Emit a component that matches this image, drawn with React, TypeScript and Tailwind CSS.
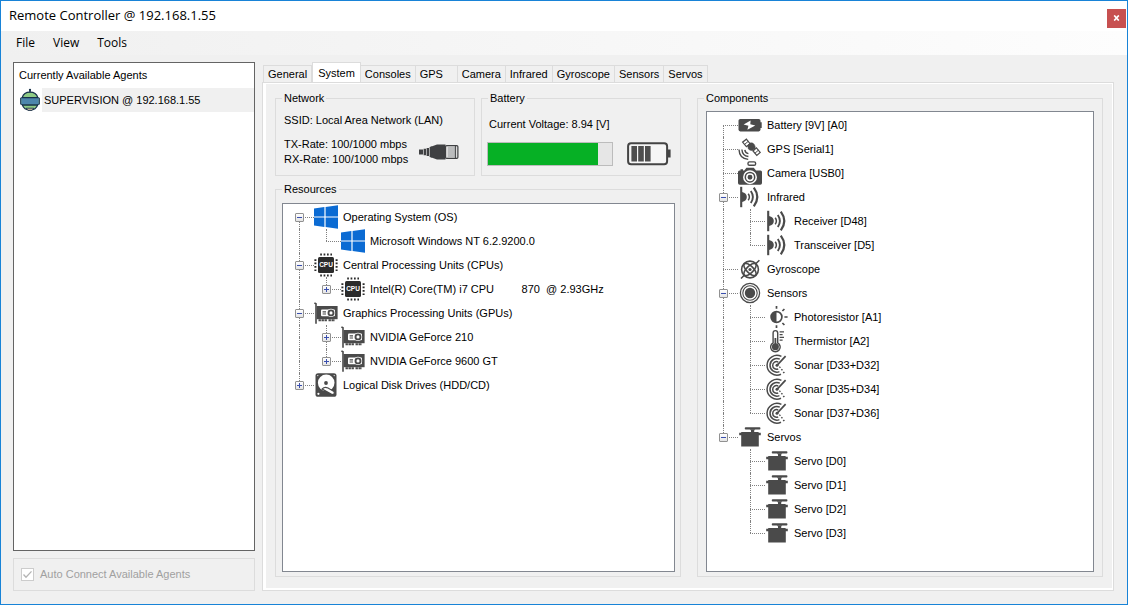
import React, { useState } from "react";

type IconName =
  | "windows"
  | "cpu"
  | "gpu"
  | "hdd"
  | "battery"
  | "gps"
  | "camera"
  | "infrared"
  | "gyroscope"
  | "sensors"
  | "photoresistor"
  | "thermistor"
  | "sonar"
  | "servo";

interface TreeItem {
  label: string;
  icon: IconName;
  open?: boolean;
  expandable?: boolean;
  children?: TreeItem[];
}

const INK = "#4a4a4a";

const glyphs: Record<IconName, React.ReactNode> = {
  windows: (
    <g fill="#0b6bd3">
      <path d="M0 3.6 10.4 2.1V11.4H0ZM11.6 1.9 24 .2V11.4H11.6ZM0 12.6H10.4V22L0 20.4ZM11.6 12.6H24V23.8L11.6 22.1Z" />
    </g>
  ),
  cpu: (
    <g>
      <rect x="4" y="4" width="16" height="16" rx="1.5" fill="#2b2b2b" />
      <g stroke="#2b2b2b" strokeWidth="2" strokeDasharray="1.7 1.7">
        <path d="M6.2 1.6H18M6.2 22.4H18M1.4 6.2V18M22.6 6.2V18" />
      </g>
      <text
        x="12"
        y="14.2"
        textAnchor="middle"
        fontSize="6.5"
        fontWeight="700"
        fill="#fff"
        fontFamily="Liberation Sans, sans-serif"
      >
        CPU
      </text>
    </g>
  ),
  gpu: (
    <g>
      <path d="M.4 2 2 2.8V22.8" fill="none" stroke={INK} strokeWidth="1.6" />
      <rect x="2.6" y="5" width="21" height="13.2" fill={INK} />
      <path d="M4.5 19.2H13M14.5 19.2H21" stroke={INK} strokeWidth="2" strokeDasharray="2.4 .6" />
      <rect x="7" y="8.6" width="14" height="6.6" rx="1" fill="#fff" />
      <path d="M8.6 10.9H12M8.6 13H12" stroke={INK} strokeWidth="1.1" />
      <circle cx="17" cy="11.9" r="4.2" fill="#fff" />
      <circle cx="17" cy="11.9" r="2.5" fill="#fff" stroke={INK} strokeWidth="1.9" />
    </g>
  ),
  hdd: (
    <g>
      <rect x="1.5" y=".2" width="21" height="23.6" rx="2.6" fill={INK} />
      <circle cx="12.2" cy="9.8" r="8.3" fill="#fff" />
      <circle cx="12" cy="10" r="1.9" fill={INK} />
      <path
        d="M8.2 16Q10.6 13.2 14 15L20 18.6Q21.2 21.6 18 21.6Z"
        fill="#fff"
        stroke={INK}
        strokeWidth="1.2"
      />
      <circle cx="4.4" cy="20.8" r="1.1" fill="#fff" />
      <circle cx="3.8" cy="2.6" r=".6" fill="#fff" />
      <circle cx="20.2" cy="2.6" r=".6" fill="#fff" />
    </g>
  ),
  battery: (
    <g>
      <rect x=".5" y="6" width="22" height="12.4" rx="1.8" fill={INK} />
      <path d="M22 9.3H23.7V15H22Z" fill={INK} />
      <path d="M12.6 7.4 5.6 11.6 10.4 12.7 9.4 16.8 17.3 12.4 12.3 11.2Z" fill="#fff" />
    </g>
  ),
  gps: (
    <g fill="none" stroke={INK}>
      <path d="M8.4 2.2 12 6.6 8.4 9.6 4.6 5.2ZM18.4 10.8 22.2 15.4 18.8 18.4 15 14Z" strokeWidth="1.2" />
      <path d="M6.6 7.4 10.2 4.4M17 16.2 20.4 13.2" strokeWidth="1" />
      <path d="M9.6 8.4 12.2 6Q14.4 5.4 16 7.2T17.2 11.6L14.6 13.4Q11.8 13.8 10.4 12Z" fill={INK} strokeWidth=".6" />
      <path d="M1 12.5Q1.3 21.6 10.2 22.4M3.9 12.5Q4.3 18.8 10.4 19.5M6.8 12.8Q7.3 16 10.4 16.6" strokeWidth="1.4" />
    </g>
  ),
  camera: (
    <g>
      <rect x="10" y=".9" width="7.6" height="3.4" rx="1.4" fill="#fff" stroke={INK} strokeWidth="1.4" />
      <path
        d="M1.5 9.4H2.5V8.2H5V9.4H6.3L8.4 6.8H15.8L18 9.4H22.5Q24 9.4 24 11V22Q24 23.7 22.3 23.7H1.7Q0 23.7 0 22V11Q0 9.4 1.5 9.4Z"
        fill={INK}
      />
      <circle cx="12" cy="16.2" r="6.2" fill={INK} stroke="#fff" strokeWidth="1.5" />
      <circle cx="12" cy="16.2" r="3.2" fill="none" stroke="#fff" strokeWidth="1.5" />
    </g>
  ),
  infrared: (
    <g fill="none" stroke={INK}>
      <path d="M3.2 1.8V22.2" strokeWidth="2.1" />
      <path d="M4 7Q8.8 8 8.8 12T4 17Z" fill={INK} stroke="none" />
      <path d="M10.2 8.8Q12.6 12 10.2 15.2" strokeWidth="1.5" />
      <path d="M12.8 6Q17 12 12.8 18" strokeWidth="1.9" />
      <path d="M15.8 2.6Q22.8 12 15.8 21.4" strokeWidth="2.2" />
    </g>
  ),
  gyroscope: (
    <g fill="none" stroke={INK} strokeWidth="1.6">
      <circle cx="12" cy="12.5" r="8.4" />
      <ellipse cx="12" cy="12.5" rx="8" ry="3.4" transform="rotate(45 12 12.5)" />
      <ellipse cx="12" cy="12.5" rx="8" ry="3.4" transform="rotate(-45 12 12.5)" />
      <path d="M3 21.5 6.5 18M17.5 7 21.4 3.2" strokeWidth="1.6" />
      <circle cx="12" cy="12.5" r="1.6" fill={INK} stroke="none" />
    </g>
  ),
  sensors: (
    <g fill="none" stroke={INK} strokeWidth="1.3">
      <circle cx="12" cy="12" r="9.6" />
      <circle cx="12" cy="12" r="7.2" strokeWidth="1.1" />
      <circle cx="12" cy="12" r="5.2" fill={INK} stroke="none" />
    </g>
  ),
  photoresistor: (
    <g fill="none" stroke={INK} strokeWidth="1.7">
      <circle cx="11.5" cy="12" r="5.4" />
      <path d="M11.5 6.6A5.4 5.4 0 0 0 11.5 17.4Z" fill={INK} stroke="none" />
      <path d="M11.5 1V3.8M11.5 20.2V23M19.4 12H22.6M17.4 6 19.4 4M17.4 18 19.4 20" />
    </g>
  ),
  thermistor: (
    <g fill="none" stroke={INK} strokeWidth="1.4">
      <path d="M8.1 13.8V4Q8.1 1.6 10.4 1.6T12.7 4V13.8A4.8 4.8 0 1 1 8.1 13.8Z" />
      <circle cx="10.4" cy="17.8" r="3.5" fill={INK} stroke="none" />
      <path d="M10.4 9V18" strokeWidth="1.8" />
      <path d="M14.6 2.8H19M14.6 5.6H17.6M14.6 8.4H19M14.6 11.2H17.6" strokeWidth="1.3" />
    </g>
  ),
  sonar: (
    <g fill="none" stroke={INK} strokeWidth="1.5">
      <path d="M16.4 3.4A9.9 9.9 0 1 0 16 21.3" />
      <path d="M14.8 6.2A6.8 6.8 0 1 0 14.4 18.6" />
      <path d="M13.2 9A3.8 3.8 0 1 0 13.2 15.8" />
      <path d="M12 12.3 20.6 3.2" strokeWidth="1.7" />
      <circle cx="12" cy="12.3" r="1.5" fill={INK} stroke="none" />
      <path d="M18.2 20 19.4 19M16.4 17.2 17.4 16.2M14.4 14.6 15.4 13.8" strokeWidth="1.6" />
    </g>
  ),
  servo: (
    <g fill={INK}>
      <rect x="6.8" y="2.2" width="15.6" height="2.3" rx=".8" />
      <path d="M11.8 4.2H17.2L16.2 5.6V7H20.6V7.8H22.8V10.2H20.8V21.6H3.2V10.2H1.2V7.8H3.2V7H13V5.6Z" />
    </g>
  ),
};

function Icon({ name }: { name: IconName }) {
  return (
    <svg viewBox="0 0 24 24" className="size-6 shrink-0" aria-hidden="true">
      {glyphs[name]}
    </svg>
  );
}

const resources: TreeItem[] = [
  {
    label: "Operating System (OS)",
    icon: "windows",
    open: true,
    children: [{ label: "Microsoft Windows NT 6.2.9200.0", icon: "windows" }],
  },
  {
    label: "Central Processing Units (CPUs)",
    icon: "cpu",
    open: true,
    children: [
      { label: "Intel(R) Core(TM) i7 CPU         870  @ 2.93GHz", icon: "cpu", expandable: true },
    ],
  },
  {
    label: "Graphics Processing Units (GPUs)",
    icon: "gpu",
    open: true,
    children: [
      { label: "NVIDIA GeForce 210", icon: "gpu", expandable: true },
      { label: "NVIDIA GeForce 9600 GT", icon: "gpu", expandable: true },
    ],
  },
  { label: "Logical Disk Drives (HDD/CD)", icon: "hdd", expandable: true },
];

const components: TreeItem[] = [
  { label: "Battery [9V] [A0]", icon: "battery" },
  { label: "GPS [Serial1]", icon: "gps" },
  { label: "Camera [USB0]", icon: "camera" },
  {
    label: "Infrared",
    icon: "infrared",
    open: true,
    children: [
      { label: "Receiver [D48]", icon: "infrared" },
      { label: "Transceiver [D5]", icon: "infrared" },
    ],
  },
  { label: "Gyroscope", icon: "gyroscope" },
  {
    label: "Sensors",
    icon: "sensors",
    open: true,
    children: [
      { label: "Photoresistor [A1]", icon: "photoresistor" },
      { label: "Thermistor [A2]", icon: "thermistor" },
      { label: "Sonar [D33+D32]", icon: "sonar" },
      { label: "Sonar [D35+D34]", icon: "sonar" },
      { label: "Sonar [D37+D36]", icon: "sonar" },
    ],
  },
  {
    label: "Servos",
    icon: "servo",
    open: true,
    children: [
      { label: "Servo [D0]", icon: "servo" },
      { label: "Servo [D1]", icon: "servo" },
      { label: "Servo [D2]", icon: "servo" },
      { label: "Servo [D3]", icon: "servo" },
    ],
  },
];

function Guide({ up, down, across }: { up: boolean; down: boolean; across: boolean }) {
  return (
    <span className="grid h-6 w-[27px] shrink-0 grid-rows-2 pl-3" aria-hidden="true">
      <span className={up ? "border-l border-dotted border-[#808080]" : ""} />
      <span
        className={
          (down ? "border-l border-dotted border-[#808080] " : "") +
          (across ? "border-t border-dotted border-t-[#808080]" : "")
        }
      />
    </span>
  );
}

interface NodeProps {
  item: TreeItem;
  trail: boolean[];
  first: boolean;
  last: boolean;
}

function TreeNode({ item, trail, first, last }: NodeProps) {
  const [open, setOpen] = useState(Boolean(item.open));
  const canExpand = item.expandable || Boolean(item.children);
  return (
    <li role="treeitem" aria-expanded={canExpand ? open : undefined}>
      <div className="flex h-6 items-center pl-1">
        {trail.map((more, i) => (
          <Guide key={i} up={more} down={more} across={false} />
        ))}
        <span className="relative">
          <Guide up={!first} down={!last} across />
          {canExpand && (
            <button
              type="button"
              aria-label={(open ? "Collapse " : "Expand ") + item.label}
              onClick={() => setOpen(!open)}
              className="absolute top-2 left-2 flex size-[9px] items-center justify-center rounded-[1px] border border-[#919191] bg-linear-to-b from-white to-[#e4e4e4]"
            >
              <svg viewBox="0 0 5 5" className="size-[5px] shrink-0" aria-hidden="true">
                <path d={open ? "M0 2H5V3H0Z" : "M0 2H2V0H3V2H5V3H3V5H2V3H0Z"} fill="#3a4fae" />
              </svg>
            </button>
          )}
        </span>
        <Icon name={item.icon} />
        <span className="pl-[5px] whitespace-pre">{item.label}</span>
      </div>
      {open && item.children && <TreeList items={item.children} trail={[...trail, !last]} />}
    </li>
  );
}

function TreeList({ items, trail }: { items: TreeItem[]; trail: boolean[] }) {
  return (
    <ul role={trail.length ? "group" : "tree"}>
      {items.map((item, i) => (
        <TreeNode
          key={item.label}
          item={item}
          trail={trail}
          first={i === 0 && trail.length === 0}
          last={i === items.length - 1}
        />
      ))}
    </ul>
  );
}

function Group({
  title,
  className = "",
  bodyClassName,
  children,
}: {
  title: string;
  className?: string;
  bodyClassName: string;
  children: React.ReactNode;
}) {
  return (
    <fieldset className={"flex min-w-0 flex-col border border-[#dcdcdc] " + className}>
      <legend className="ml-1.5 px-0.5 leading-[13px]">{title}</legend>
      <div className={"flex flex-1 flex-col " + bodyClassName}>{children}</div>
    </fieldset>
  );
}

function RobotIcon() {
  return (
    <svg viewBox="0 0 22 24" className="h-6 w-[22px] shrink-0" aria-hidden="true">
      <path d="M11 1.5V5" stroke="#16304a" strokeWidth="1.6" />
      <circle cx="11" cy="1.8" r="1.1" fill="#16304a" />
      <path
        d="M11 4.2Q17.2 4.2 18.8 9.6L20.2 10.4V15.8L18.8 16.6Q17 22 11 22T3.2 16.6L1.8 15.8V10.4L3.2 9.6Q4.8 4.2 11 4.2Z"
        fill="#8fcb85"
        stroke="#16304a"
        strokeWidth="1.3"
      />
      <rect x="2.4" y="10" width="17.2" height="6.6" fill="#4d86ac" />
      <path d="M3 9.6H19M3 17H19" stroke="#16304a" strokeWidth="1.4" />
      <path d="M7.2 20.2H14.8L13 22.4H9Z" fill="#c9b79d" stroke="#16304a" strokeWidth=".8" />
    </svg>
  );
}

function PlugIcon() {
  return (
    <svg viewBox="0 0 40 18" className="h-[18px] w-10 shrink-0" aria-hidden="true">
      <path d="M0 6.4H4V11.6H0ZM4.6 5.8H7V12.2H4.6ZM7.6 5H10V13H7.6ZM10.6 4 13 3.2V14.8L10.6 14Z" fill="#3f4042" />
      <path d="M12.5 3.4 18 1.6H26.5V16.4H18L12.5 14.6Z" fill="#3f4042" />
      <rect x="26.5" y="2.6" width="12.4" height="12.8" rx="1.2" fill="#dcdcdc" stroke="#3f4042" strokeWidth="1.2" />
      <path d="M29 5H36M29 7H36M29 9H36M29 11H36M29 13H36" stroke="#9a9c9e" strokeWidth="1" />
      <path d="M36.4 3V15" stroke="#3f4042" strokeWidth="1" />
    </svg>
  );
}

function BatteryLevelIcon() {
  return (
    <svg viewBox="0 0 44 24" className="h-6 w-11 shrink-0" aria-hidden="true">
      <rect x="1.1" y="1.2" width="39" height="21" rx="3" fill="#f6f6f6" stroke="#444" strokeWidth="2" />
      <path d="M41 7.5H43.6V15.5H41Z" fill="#444" />
      <path d="M4.4 4H10V19.4H4.4ZM11.2 4H16.8V19.4H11.2ZM18 4H23.6V19.4H18Z" fill="#4e4e4e" />
    </svg>
  );
}

const tabs = ["General", "System", "Consoles", "GPS", "Camera", "Infrared", "Gyroscope", "Sensors", "Servos"];

export default function App() {
  const [tab, setTab] = useState("System");
  const charge = 89;

  return (
    <div className="flex min-h-screen flex-col border border-[#1883d7] bg-[#f0f0f0] font-['Liberation_Sans',Arial,sans-serif] text-[11px] text-black">
      <header className="flex h-[30px] shrink-0 items-center justify-between bg-white pr-px pl-2 font-['Open_Sans',sans-serif] text-[13px]">
        <h1>Remote Controller @ 192.168.1.55</h1>
        <button
          type="button"
          aria-label="Close"
          className="mt-1 flex size-[19px] items-center justify-center bg-[#c75050]"
        >
          <svg viewBox="0 0 7 6" className="h-1.5 w-[7px]" aria-hidden="true">
            <path d="M1.2.4 5.8 5.6M5.8.4 1.2 5.6" stroke="#fff" strokeWidth="1.6" />
          </svg>
        </button>
      </header>
      <nav className="flex h-6 shrink-0 items-center gap-[18px] bg-linear-to-r from-[#f0f0f0] to-[#fdfdfd] pl-[15px] font-['Open_Sans',sans-serif] text-xs">
        <button type="button">File</button>
        <button type="button">View</button>
        <button type="button">Tools</button>
      </nav>

      <div className="flex flex-1 gap-[7px] pt-[7px] pr-[13px] pb-[13px] pl-3">
        <aside className="flex w-[242px] shrink-0 flex-col gap-[7px]">
          <section className="flex-1 border border-[#646464] bg-white">
            <h2 className="flex h-[25px] items-center pl-[5px]">Currently Available Agents</h2>
            <ul>
              <li className="flex h-6 items-center pl-[5px]">
                <RobotIcon />
                <span className="ml-px flex h-6 flex-1 items-center bg-[#f0f0f0] pl-0.5">
                  SUPERVISION @ 192.168.1.55
                </span>
              </li>
            </ul>
          </section>
          <label className="flex h-[33px] items-center gap-1.5 border border-[#dcdcdc] pl-[7px] text-[#a0a0a0]">
            <span className="relative flex size-[13px]">
              <input
                type="checkbox"
                defaultChecked
                disabled
                className="size-[13px] appearance-none border border-[#cccccc] bg-white"
              />
              <svg viewBox="0 0 13 13" className="absolute inset-0 size-[13px]" aria-hidden="true">
                <path d="M2.5 6.5 5 9.2 10.5 3.4" fill="none" stroke="#b4b4b4" strokeWidth="1.3" />
              </svg>
            </span>
            Auto Connect Available Agents
          </label>
        </aside>

        <main className="flex min-w-0 flex-1 flex-col">
          <div role="tablist" className="flex h-5 items-end pl-px">
            {tabs.map((name) => (
              <button
                key={name}
                type="button"
                role="tab"
                aria-selected={tab === name}
                onClick={() => setTab(name)}
                className={
                  tab === name
                    ? "h-5 min-w-[42px] border-x border-t border-[#dcdcdc] bg-white px-[5px] text-left leading-[18px]"
                    : "h-[17px] min-w-[42px] border-t border-r border-[#dcdcdc] px-1 text-left leading-[17px] first:border-l"
                }
              >
                {name}
              </button>
            ))}
          </div>
          <div role="tabpanel" className="flex flex-1 border border-[#dcdcdc] bg-white pt-px pr-px pb-0.5 pl-[3px]">
            <div className="grid min-w-0 flex-1 grid-cols-2 gap-4 bg-[#f0f0f0] pt-2 pr-[9px] pb-[11px] pl-[9px]">
              <div className="flex min-w-0 flex-col gap-[7px]">
                <div className="grid grid-cols-2 gap-1.5">
                  <Group title="Network" className="h-[84px]" bodyClassName="pr-[15px] pl-2">
                    <p className="mt-[7px] leading-4">SSID: Local Area Network (LAN)</p>
                    <div className="mt-[9px] flex items-center justify-between">
                      <p className="leading-[15px]">
                        TX-Rate: 100/1000 mbps
                        <br />
                        RX-Rate: 100/1000 mbps
                      </p>
                      <PlugIcon />
                    </div>
                  </Group>
                  <Group title="Battery" className="h-[84px]" bodyClassName="pr-[9px] pl-[5px]">
                    <p className="mt-[11px] pl-0.5 leading-4">Current Voltage: 8.94 [V]</p>
                    <div className="mt-2.5 flex items-center gap-3.5">
                      <div
                        role="progressbar"
                        aria-label="Battery charge"
                        aria-valuenow={charge}
                        className="h-6 flex-1 border border-[#bcbcbc] bg-[#e6e6e6]"
                      >
                        <div className="h-full bg-[#06b025]" style={{ width: `${charge}%` }} />
                      </div>
                      <BatteryLevelIcon />
                    </div>
                  </Group>
                </div>
                <Group title="Resources" className="flex-1" bodyClassName="pt-[7px] pr-[5px] pb-1 pl-1.5">
                  <div className="flex-1 border border-[#828790] bg-white pt-px">
                    <TreeList items={resources} trail={[]} />
                  </div>
                </Group>
              </div>
              <Group title="Components" bodyClassName="px-2 pt-1.5 pb-1">
                <div className="flex-1 border border-[#828790] bg-white pt-px">
                  <TreeList items={components} trail={[]} />
                </div>
              </Group>
            </div>
          </div>
        </main>
      </div>
    </div>
  );
}
